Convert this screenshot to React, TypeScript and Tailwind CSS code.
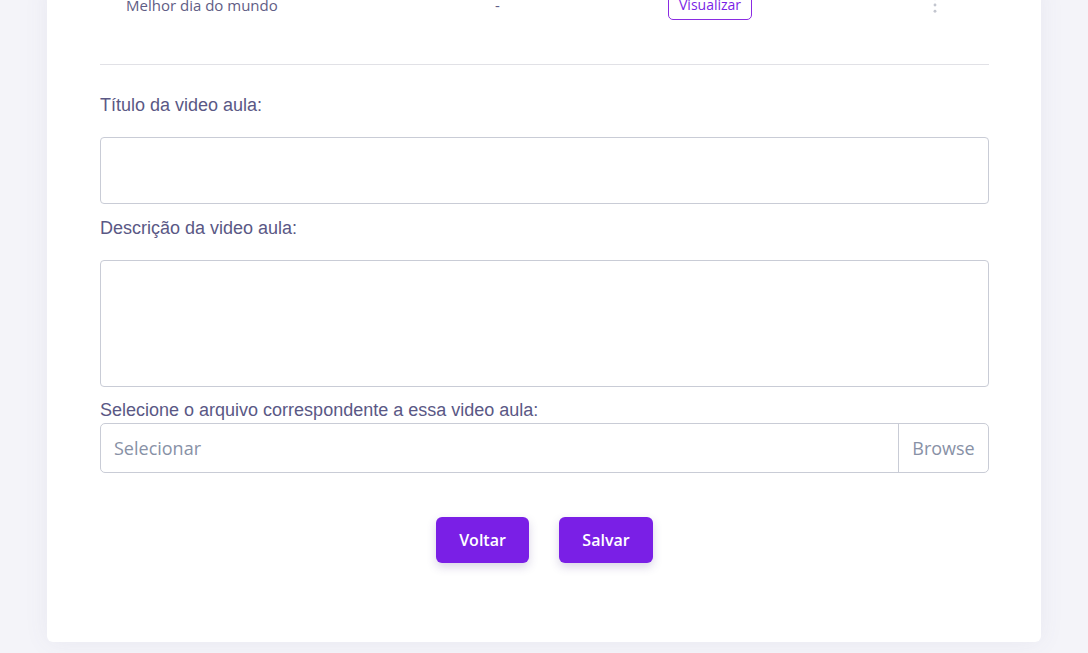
import React from 'react'

function DotsIcon({ className }: { className?: string }) {
  return (
    <svg className={className} viewBox="0 0 4 20" fill="currentColor">
      <circle cx="2" cy="3" r="1.6" />
      <circle cx="2" cy="10" r="1.6" />
      <circle cx="2" cy="17" r="1.6" />
    </svg>
  )
}

export default function App() {
  const label = "block text-[18px] text-[#5a5885] font-['Liberation_Sans',Arial,sans-serif]"

  return (
    <div className="min-h-screen h-[653px] overflow-hidden bg-[#f4f4f9] font-['Open_Sans',sans-serif]">
      <div className="mx-[47px] w-[994px] bg-white rounded-b-[6px] shadow-[0_0_24px_rgba(90,90,140,0.08)] pl-[53px] pr-[52px] pb-[79px] -mt-[15px]">
        {/* table row, scrolled half out of view */}
        <div className="flex items-center h-[40px] text-[15px] text-[#5f5d85]">
          <div className="w-[299px] pl-[26px]">Melhor dia do mundo</div>
          <div className="w-[269px] pl-[96px]">-</div>
          <div className="w-[230px]">
            <button className="h-[30px] px-[10px] rounded-[5px] border border-[#8a2be2] text-[#7a1fe6] text-[14px] leading-none bg-white">
              Visualizar
            </button>
          </div>
          <div className="pl-[35px] text-[#c3c6cf]">
            <DotsIcon className="w-[4px] h-[18px]" />
          </div>
        </div>

        <hr className="mt-[39px] border-0 border-t border-[#e1e1e6]" />

        <form className="flex flex-col">
          <label className={`${label} leading-[27px] mt-[27px]`}>Título da video aula:</label>
          <input
            type="text"
            className="mt-[18px] h-[67px] w-full rounded-[4px] border border-[#c9ccd6] px-4 outline-none"
          />

          <label className={`${label} leading-[27px] mt-[11px]`}>Descrição da video aula:</label>
          <textarea className="mt-[18px] h-[127px] w-full rounded-[4px] border border-[#c9ccd6] px-4 py-2 resize-none outline-none" />

          <label className={`${label} leading-[25px] mt-[11px]`}>
            Selecione o arquivo correspondente a essa video aula:
          </label>
          <div className="flex h-[50px] w-full rounded-[5px] border border-[#c9ccd6] text-[18px] text-[#8891a6] overflow-hidden">
            <div className="flex-1 flex items-center pl-[13px]">Selecionar</div>
            <div className="w-[90px] flex items-center justify-center border-l border-[#c9ccd6]">Browse</div>
          </div>

          <div className="mt-[44px] flex justify-center gap-[30px]">
            <button
              type="button"
              className="w-[93px] h-[46px] rounded-[6px] bg-[#7a1fe6] text-white text-[16px] font-semibold shadow-[0_4px_10px_rgba(80,60,140,0.22)]"
            >
              Voltar
            </button>
            <button
              type="button"
              className="w-[94px] h-[46px] rounded-[6px] bg-[#7a1fe6] text-white text-[16px] font-semibold shadow-[0_4px_10px_rgba(80,60,140,0.22)]"
            >
              Salvar
            </button>
          </div>
        </form>
      </div>
    </div>
  )
}
